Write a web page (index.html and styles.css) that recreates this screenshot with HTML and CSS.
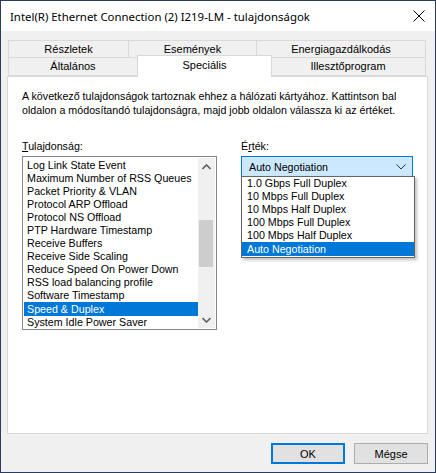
FILE: index.html
```html
<!DOCTYPE html>
<html lang="hu">
<head>
<meta charset="utf-8">
<title>tulajdonságok</title>
<link rel="stylesheet" href="styles.css">
</head>
<body>
<div class="window">
  <div class="titlebar">
    <span class="title">Intel(R) Ethernet Connection (2) I219-LM - tulajdonságok</span>
    <span class="close">
      <svg width="12" height="12" viewBox="0 0 12 12"><path d="M0.5 0.5 L11.5 11.5 M11.5 0.5 L0.5 11.5" stroke="#000" stroke-width="1" fill="none"/></svg>
    </span>
  </div>
  <div class="client">
    <div class="tabs">
      <div class="tabrow top">
        <div class="tab t1">Részletek</div>
        <div class="tab t2">Események</div>
        <div class="tab t3">Energiagazdálkodás</div>
      </div>
      <div class="tabrow bottom">
        <div class="tab b1">Általános</div>
        <div class="tab b2 active">Speciális</div>
        <div class="tab b3">Illesztőprogram</div>
      </div>
    </div>
    <div class="panel">
      <p class="desc">A következő tulajdonságok tartoznak ehhez a hálózati kártyához. Kattintson bal oldalon a módosítandó tulajdonságra, majd jobb oldalon válassza ki az értéket.</p>
      <div class="cols">
        <div class="col left">
          <div class="label"><u>T</u>ulajdonság:</div>
          <div class="listbox">
            <ul class="items">
              <li>Log Link State Event</li>
              <li>Maximum Number of RSS Queues</li>
              <li>Packet Priority &amp; VLAN</li>
              <li>Protocol ARP Offload</li>
              <li>Protocol NS Offload</li>
              <li>PTP Hardware Timestamp</li>
              <li>Receive Buffers</li>
              <li>Receive Side Scaling</li>
              <li>Reduce Speed On Power Down</li>
              <li>RSS load balancing profile</li>
              <li>Software Timestamp</li>
              <li class="sel">Speed &amp; Duplex</li>
              <li>System Idle Power Saver</li>
            </ul>
            <div class="scrollbar">
              <div class="arrow">
                <svg width="9" height="6" viewBox="0 0 9 6"><path d="M0.5 5 L4.5 1 L8.5 5" stroke="#606060" stroke-width="1.6" fill="none"/></svg>
              </div>
              <div class="track">
                <div class="thumb"></div>
              </div>
              <div class="arrow">
                <svg width="9" height="6" viewBox="0 0 9 6"><path d="M0.5 1 L4.5 5 L8.5 1" stroke="#606060" stroke-width="1.6" fill="none"/></svg>
              </div>
            </div>
          </div>
        </div>
        <div class="col right">
          <div class="label">É<u>r</u>ték:</div>
          <div class="combo-wrap">
            <div class="combo">
              <span>Auto Negotiation</span>
              <svg class="chev" width="10" height="6" viewBox="0 0 10 6"><path d="M0.5 0.5 L5 5 L9.5 0.5" stroke="#333" stroke-width="1" fill="none"/></svg>
            </div>
            <ul class="dropdown">
              <li>1.0 Gbps Full Duplex</li>
              <li>10 Mbps Full Duplex</li>
              <li>10 Mbps Half Duplex</li>
              <li>100 Mbps Full Duplex</li>
              <li>100 Mbps Half Duplex</li>
              <li class="sel">Auto Negotiation</li>
            </ul>
          </div>
        </div>
      </div>
    </div>
    <div class="buttons">
      <button class="btn default">OK</button>
      <button class="btn">Mégse</button>
    </div>
  </div>
</div>
</body>
</html>
```
FILE: styles.css
```css
html, body {
  margin: 0;
  padding: 0;
  background: #f0f0f0;
}
.window {
  width: 434px;
  height: 471px;
  border: 1px solid #2b3b5e;
  display: flex;
  flex-direction: column;
  background: #f0f0f0;
  font-family: "Liberation Sans", Arial, sans-serif;
  font-size: 10.7px;
  color: #000;
}
.titlebar {
  height: 30px;
  background: #fff;
  display: flex;
  align-items: center;
  justify-content: space-between;
  padding: 0 10px 0 9px;
}
.title {
  font-family: "Noto Sans", "Liberation Sans", sans-serif;
  font-size: 11.4px;
  color: #000;
}
.close {
  display: flex;
  align-items: center;
}
.client {
  flex: 1;
  display: flex;
  flex-direction: column;
  padding: 9px 6px 0 6px;
}
.tabs {
  display: flex;
  flex-direction: column;
  font-size: 11px;
}
.tabrow {
  display: flex;
  height: 18px;
  padding-left: 1px;
}
.tab {
  box-sizing: border-box;
  height: 18px;
  border: 1px solid #d9d9d9;
  border-left: none;
  background: #f0f0f0;
  text-align: center;
  line-height: 16px;
}
.tabrow .tab:first-child {
  border-left: 1px solid #d9d9d9;
}
.tabrow.bottom .tab {
  border-top: none;
  height: 18px;
  line-height: 17px;
}
.t1 { width: 121px; }
.t2 { width: 128px; }
.t3 { width: 169px; }
.b1 { width: 130px; }
.b2 { width: 133px; }
.b3 { width: 155px; }
.tabrow.bottom .tab.active {
  background: #fff;
  border: 1px solid #d9d9d9;
  border-bottom: none;
  height: 22px;
  margin-top: -3px;
  margin-bottom: -1px;
  line-height: 18px;
  margin-left: -1px;
  margin-right: -1px;
  width: 135px;
  z-index: 1;
}
.panel {
  box-sizing: border-box;
  height: 358px;
  width: 421px;
  background: #fff;
  border: 1px solid #d9d9d9;
  padding: 12px 14px 0 14px;
}
.desc {
  margin: 0;
  line-height: 14px;
}
.cols {
  display: flex;
  margin-top: 23px;
  gap: 24px;
}
.label {
  height: 16px;
  line-height: 13px;
}
.col.left { width: 195px; }
.col.right { width: 174px; }
.listbox {
  box-sizing: border-box;
  width: 195px;
  height: 174px;
  border: 1px solid #828790;
  display: flex;
  padding: 1px;
}
.items {
  list-style: none;
  margin: 0;
  padding: 1px 0 0 0;
  flex: 1;
}
.items li, .dropdown li {
  height: 13px;
  line-height: 13px;
  padding-left: 3px;
  white-space: nowrap;
}
.items li.sel, .dropdown li.sel {
  background: #0078d7;
  color: #fff;
}
.items li.sel {
  height: 14px;
  line-height: 14px;
}
.scrollbar {
  width: 17px;
  display: flex;
  flex-direction: column;
  background: #f0f0f0;
}
.arrow {
  height: 17px;
  display: flex;
  align-items: center;
  justify-content: center;
}
.track {
  flex: 1;
  display: flex;
  flex-direction: column;
  justify-content: center;
  padding: 0 2px 0 1px;
}
.thumb {
  height: 47px;
  background: #cdcdcd;
}
.combo-wrap {
  position: relative;
}
.combo {
  box-sizing: border-box;
  height: 21px;
  border: 1px solid #0078d7;
  background: #cce8ff;
  display: flex;
  align-items: center;
  justify-content: space-between;
  padding: 0 6px 0 7px;
}
.chev {
  display: block;
}
.dropdown {
  position: absolute;
  top: 20px;
  left: 0;
  width: 174px;
  box-sizing: border-box;
  list-style: none;
  margin: 0;
  padding: 0 0 1px 0;
  background: #fff;
  border: 1px solid #646464;
  box-shadow: 2px 2px 3px rgba(0,0,0,0.25);
}
.dropdown li {
  padding-left: 5px;
}
.dropdown li.sel {
  height: 14px;
  line-height: 14px;
}
.buttons {
  display: flex;
  justify-content: flex-end;
  gap: 9px;
  padding: 9px 1px 0 0;
}
.btn {
  box-sizing: border-box;
  width: 74px;
  height: 21px;
  background: #e1e1e1;
  border: 1px solid #adadad;
  font-family: "Liberation Sans", Arial, sans-serif;
  font-size: 11px;
  color: #000;
  padding: 0;
  margin: 0;
}
.btn.default {
  border: 2px solid #0078d7;
}
```
